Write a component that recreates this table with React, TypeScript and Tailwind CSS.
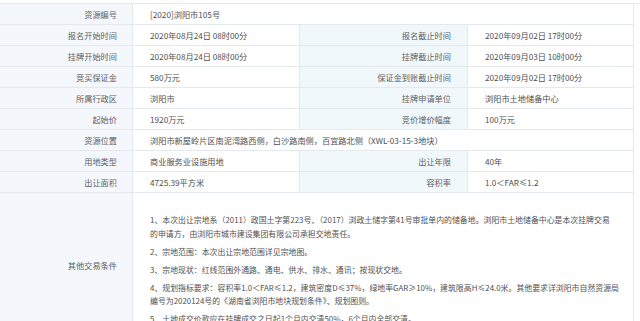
import React from "react";

const B = "border-b border-r border-[#e4e9ed]";
const L1 = `bg-[#f4f8fc] flex items-center justify-end pr-[15px] text-[#606060] ${B}`;
const L2 = `bg-[#f0f8fc] flex items-center justify-end pr-[16px] text-[#606060] ${B}`;
const V = `bg-white flex items-center pl-[17px] text-[#505050] whitespace-nowrap ${B}`;

type Row = [string, string, string?, string?];

const rows: Row[] = [
  ["报名开始时间", "2020年08月24日 08时00分", "报名截止时间", "2020年09月02日 17时00分"],
  ["挂牌开始时间", "2020年08月24日 08时00分", "挂牌截止时间", "2020年09月03日 10时00分"],
  ["竞买保证金", "580万元", "保证金到账截止时间", "2020年09月02日 17时00分"],
  ["所属行政区", "浏阳市", "挂牌申请单位", "浏阳市土地储备中心"],
  ["起始价", "1920万元", "竞价增价幅度", "100万元"],
];

const rows2: Row[] = [
  ["用地类型", "商业服务业设施用地", "出让年限", "40年"],
  ["出让面积", "4725.39平方米", "容积率", "1.0＜FAR≤1.2"],
];

function Pair({ r }: { r: Row }) {
  return (
    <>
      <div className={`${L1} h-[21px]`}>{r[0]}</div>
      <div className={`${V} h-[21px]`}>{r[1]}</div>
      <div className={`${L2} h-[21px]`}>{r[2]}</div>
      <div className={`${V} h-[21px]`}>{r[3]}</div>
    </>
  );
}

export default function App() {
  return (
    <div className="w-[640px] h-[321px] overflow-hidden bg-white pt-[3px] font-['Noto_Sans_CJK_SC','Microsoft_YaHei',sans-serif] text-[8.2px] leading-none">
      <div className="grid grid-cols-[133px_167px_168px_166px] border-t border-[#e4e9ed]">
        <div className={`${L1} h-[21px]`}>资源编号</div>
        <div className={`${V} h-[21px] col-span-3`}>[2020]浏阳市105号</div>
        {rows.map((r, i) => (
          <Pair key={i} r={r} />
        ))}
        <div className={`${L1} h-[21px]`}>资源位置</div>
        <div className={`${V} h-[21px] col-span-3`}>
          浏阳市新屋岭片区南泥湾路西侧，白沙路南侧，百宜路北侧（XWL-03-15-3地块）
        </div>
        {rows2.map((r, i) => (
          <Pair key={i} r={r} />
        ))}
        <div className={`${L1}`}>其他交易条件</div>
        <div className={`bg-white col-span-3 pl-[17px] pr-[10px] pt-[20px] pb-[12px] text-[#505050] text-[7.9px] leading-[13.5px] flex flex-col gap-[4.5px] ${B}`}>
          <div className="flex flex-col whitespace-nowrap">
            <span>1、本次出让宗地系（2011）政国土字第223号、（2017）浏政土储字第41号审批单内的储备地。浏阳市土地储备中心是本次挂牌交易</span>
            <span>的申请方，由浏阳市城市建设集团有限公司承担交地责任。</span>
          </div>
          <div className="whitespace-nowrap">2、宗地范围：本次出让宗地范围详见宗地图。</div>
          <div className="whitespace-nowrap">3、宗地现状：红线范围外通路、通电、供水、排水、通讯；按现状交地。</div>
          <div className="flex flex-col whitespace-nowrap">
            <span>4、规划指标要求：容积率1.0＜FAR≤1.2，建筑密度D≤37%，绿地率GAR≥10%，建筑限高H≤24.0米。其他要求详浏阳市自然资源局</span>
            <span>编号为2020124号的《湖南省浏阳市地块规划条件》、规划图则。</span>
          </div>
          <div className="whitespace-nowrap">5、土地成交价款应在挂牌成交之日起1个月内交清50%，6个月内全部交清。</div>
        </div>
      </div>
    </div>
  );
}
